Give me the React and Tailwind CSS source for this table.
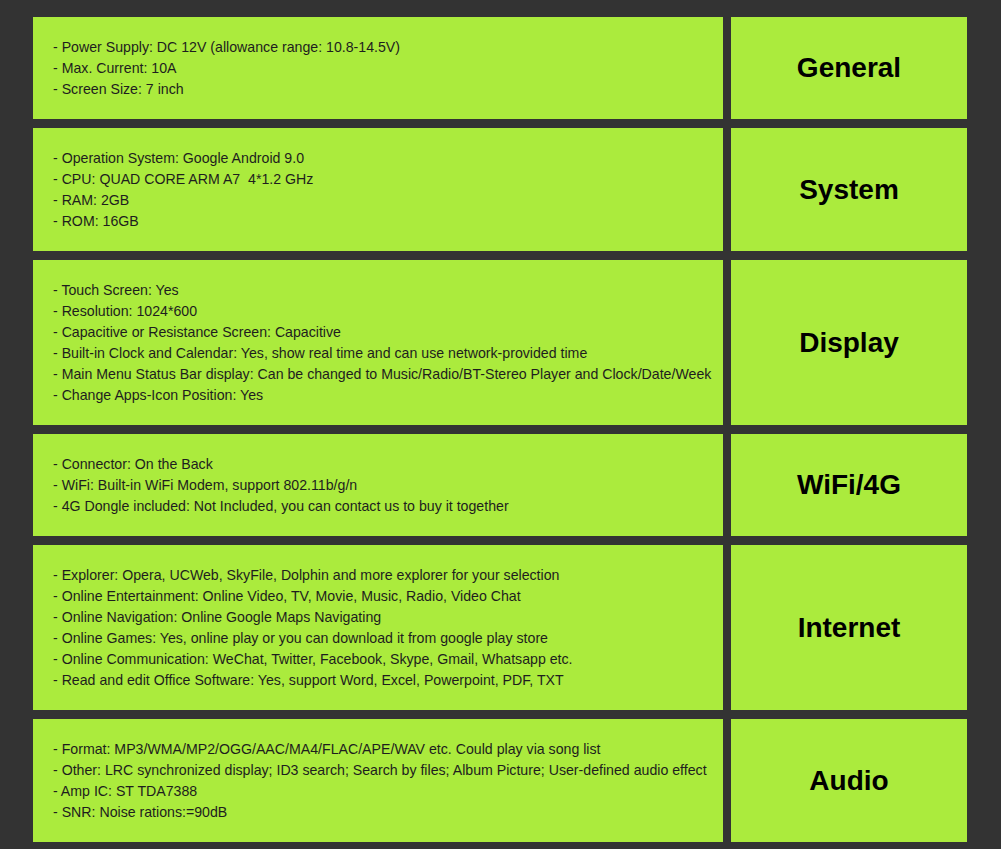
import React from "react";

const rows = [
  {
    title: "General",
    lines: [
      "- Power Supply: DC 12V (allowance range: 10.8-14.5V)",
      "- Max. Current: 10A",
      "- Screen Size: 7 inch",
    ],
  },
  {
    title: "System",
    lines: [
      "- Operation System: Google Android 9.0",
      "- CPU: QUAD CORE ARM A7  4*1.2 GHz",
      "- RAM: 2GB",
      "- ROM: 16GB",
    ],
  },
  {
    title: "Display",
    lines: [
      "- Touch Screen: Yes",
      "- Resolution: 1024*600",
      "- Capacitive or Resistance Screen: Capacitive",
      "- Built-in Clock and Calendar: Yes, show real time and can use network-provided time",
      "- Main Menu Status Bar display: Can be changed to Music/Radio/BT-Stereo Player and Clock/Date/Week",
      "- Change Apps-Icon Position: Yes",
    ],
  },
  {
    title: "WiFi/4G",
    lines: [
      "- Connector: On the Back",
      "- WiFi: Built-in WiFi Modem, support 802.11b/g/n",
      "- 4G Dongle included: Not Included, you can contact us to buy it together",
    ],
  },
  {
    title: "Internet",
    lines: [
      "- Explorer: Opera, UCWeb, SkyFile, Dolphin and more explorer for your selection",
      "- Online Entertainment: Online Video, TV, Movie, Music, Radio, Video Chat",
      "- Online Navigation: Online Google Maps Navigating",
      "- Online Games: Yes, online play or you can download it from google play store",
      "- Online Communication: WeChat, Twitter, Facebook, Skype, Gmail, Whatsapp etc.",
      "- Read and edit Office Software: Yes, support Word, Excel, Powerpoint, PDF, TXT",
    ],
  },
  {
    title: "Audio",
    lines: [
      "- Format: MP3/WMA/MP2/OGG/AAC/MA4/FLAC/APE/WAV etc. Could play via song list",
      "- Other: LRC synchronized display; ID3 search; Search by files; Album Picture; User-defined audio effect",
      "- Amp IC: ST TDA7388",
      "- SNR: Noise rations:=90dB",
    ],
  },
];

const App = () => {
  return (
    <div className="min-h-screen bg-[#333333] pl-[33px] pt-[17px] pb-[20px] font-['Liberation_Sans',Arial,sans-serif]">
      <div className="grid grid-cols-[690px_236px] gap-x-2 gap-y-[9px]">
        {rows.map((row) => (
          <React.Fragment key={row.title}>
            <div className="bg-[#abeb3d] pl-5 pr-2 pt-[20px] pb-[19px] text-[14.17px] leading-[21px] text-[#1e1e1e] whitespace-pre">
              {row.lines.map((line, i) => (
                <div key={i}>{line}</div>
              ))}
            </div>
            <div className="bg-[#abeb3d] flex items-center justify-center">
              <h2 className="text-[28px] font-bold text-black">{row.title}</h2>
            </div>
          </React.Fragment>
        ))}
      </div>
    </div>
  );
};

export default App;
